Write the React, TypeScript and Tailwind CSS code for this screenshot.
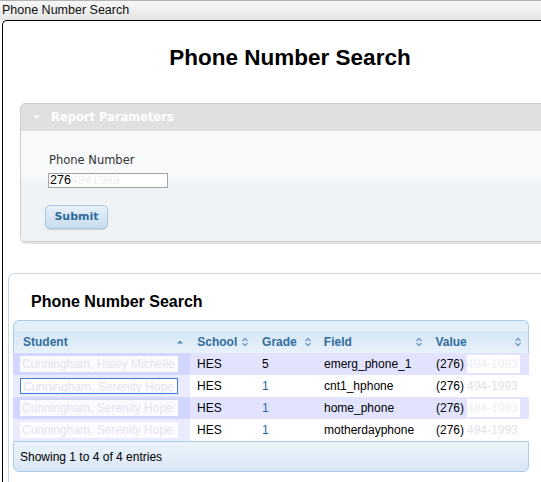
import React from 'react';

type Row = {
  student: string;
  grade: string;
  field: string;
  rest: string;
  focus?: boolean;
};

const rows: Row[] = [
  { student: 'Cunningham, Haley Michelle', grade: '5', field: 'emerg_phone_1', rest: '494-1993' },
  { student: 'Cunningham, Serenity Hope', grade: '1', field: 'cnt1_hphone', rest: '494-1993', focus: true },
  { student: 'Cunningham, Serenity Hope', grade: '1', field: 'home_phone', rest: '494-1993' },
  { student: 'Cunningham, Serenity Hope', grade: '1', field: 'motherdayphone', rest: '494-1993' },
];

function SortBoth() {
  return (
    <svg width="8" height="10" viewBox="0 0 8 10" className="shrink-0">
      <path d="M1.5 4 L4 1.5 L6.5 4" fill="none" stroke="#6f9cc4" strokeWidth="1.3" />
      <path d="M1.5 6 L4 8.5 L6.5 6" fill="none" stroke="#6f9cc4" strokeWidth="1.3" />
    </svg>
  );
}

function SortAsc() {
  return (
    <svg width="8" height="8" viewBox="0 0 8 8" className="shrink-0">
      <path d="M1 5.5 L4 2.5 L7 5.5 Z" fill="#4d86b8" />
    </svg>
  );
}

function HeadCell({ label, w, pl, asc }: { label: string; w: string; pl: string; asc?: boolean }) {
  return (
    <div className={`${w} ${pl} pr-[6px] flex items-center justify-between`}>
      <span>{label}</span>
      {asc ? <SortAsc /> : <SortBoth />}
    </div>
  );
}

export default function App() {
  return (
    <div className="w-[541px] h-[482px] overflow-hidden bg-white flex flex-col font-['Liberation_Sans',Arial,sans-serif] text-black">
      {/* window caption */}
      <div className="h-[20px] shrink-0 border-t border-[#b4b4b4] bg-gradient-to-b from-[#f6f6f6] to-[#e6e6e6] pl-[2px] text-[12.5px] leading-[18px] text-[#111]">
        Phone Number Search
      </div>

      {/* page frame */}
      <div className="ml-[2px] w-[575px] flex-1 border-l border-t border-black rounded-tl-[5px] flex flex-col">
        <h1 className="pt-[24px] text-center text-[22.5px] leading-[26px] font-bold">Phone Number Search</h1>

        {/* report parameters */}
        <div className="mt-[32px] ml-[17px] border border-[#cfcfcf] rounded-[5px] shadow-[0_2px_0_#e2e2e2] overflow-hidden">
          <div className="h-[27px] bg-[#e0e0e0] flex items-center pl-[12px] gap-[11px] font-['DejaVu_Sans',Verdana,sans-serif] text-[11.5px] font-bold text-white">
            <svg width="7" height="5" viewBox="0 0 7 5">
              <path d="M0.5 0.5 L6.5 0.5 L3.5 4 Z" fill="#ffffff" />
            </svg>
            <span>Report Parameters</span>
          </div>
          <div className="h-[110px] bg-[linear-gradient(#f8f9fb_0%,#f8f9fb_38%,#eff3f6_50%,#eff3f6_100%)] pt-[21px] pl-[24px]">
            <div className="pl-[4px] font-['DejaVu_Sans',Tahoma,sans-serif] text-[11.5px] leading-[16px] text-[#333]">Phone Number</div>
            <div className="mt-[5px] ml-[3px] w-[120px] h-[15px] bg-white border border-[#a3a3a3] text-[12.5px] leading-[13px] pl-[1px] flex">
              <span>276</span>
              <span className="text-[#eceff3]">4941993</span>
            </div>
            <button className="mt-[17px] w-[63px] h-[24px] rounded-[5px] border border-[#a9c7e2] bg-gradient-to-b from-[#e8f1fa] to-[#c8dcef] shadow-[0_1px_1px_rgba(0,0,0,0.15)] font-['DejaVu_Sans',Verdana,sans-serif] text-[11px] font-bold text-[#2c6b9c]">
              Submit
            </button>
          </div>
        </div>

        {/* results */}
        <div className="mt-[31px] ml-[5px] flex-1 border-l border-t border-[#c6d6e6] rounded-tl-[6px]">
          <h2 className="pt-[18px] pl-[22px] text-[16px] leading-[20px] font-bold">Phone Number Search</h2>

          <div className="mt-[8px] ml-[4px] w-[516px] text-[12px]">
            <div className="h-[11px] rounded-t-[6px] border border-b-0 border-[#a9cbe6] bg-[#e3eff9]" />
            <div className="h-[22px] flex items-center border-l border-r border-[#a9cbe6] bg-gradient-to-b from-[#d6e7f6] to-[#e9f2fa] font-bold text-[#2f6d9f]">
              <HeadCell label="Student" w="w-[177px]" pl="pl-[9px]" asc />
              <HeadCell label="School" w="w-[65px]" pl="pl-[7px]" />
              <HeadCell label="Grade" w="w-[63px]" pl="pl-[7px]" />
              <HeadCell label="Field" w="w-[112px]" pl="pl-[6px]" />
              <HeadCell label="Value" w="w-[99px]" pl="pl-[6px]" />
            </div>
            {rows.map((r, i) => {
              const odd = i % 2 === 0;
              return (
                <div key={i} className={`h-[22px] flex items-center ${odd ? 'bg-[#e2e4ff]' : 'bg-white'}`}>
                  <div className={`w-[177px] h-full flex items-center pl-[7px] ${odd ? 'bg-[#d3d6ff]' : 'bg-[#eaebff]'}`}>
                    <span
                      className={`w-[158px] h-[16px] leading-[16px] pl-[2px] bg-white/90 text-[#e4e4ee] whitespace-nowrap overflow-hidden ${
                        r.focus ? 'border border-[#3d7be0] leading-[14px]' : ''
                      }`}
                    >
                      {r.student}
                    </span>
                  </div>
                  <div className="w-[65px] pl-[7px]">HES</div>
                  <div className={`w-[63px] pl-[7px] ${r.grade === '5' ? 'text-black' : 'text-[#2468b0]'}`}>{r.grade}</div>
                  <div className="w-[112px] pl-[6px]">{r.field}</div>
                  <div className="w-[99px] pl-[6px] flex whitespace-nowrap">
                    <span>(276)</span>
                    <span className={`ml-[3px] pr-[2px] ${odd ? 'bg-white text-[#eeeef5]' : 'text-[#e2e2e8]'}`}>{r.rest}</span>
                  </div>
                </div>
              );
            })}
            <div className="h-[31px] flex items-center pl-[6px] rounded-b-[6px] border border-[#a9cbe6] bg-gradient-to-b from-[#edf4fb] to-[#d8e7f4] text-[12px]">
              Showing 1 to 4 of 4 entries
            </div>
          </div>
        </div>
      </div>
    </div>
  );
}
